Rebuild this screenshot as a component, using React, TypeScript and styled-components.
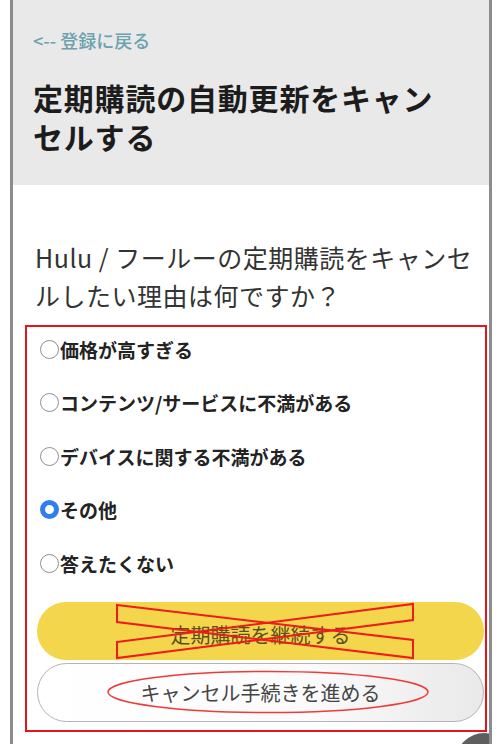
import React from 'react';
import styled, { createGlobalStyle } from 'styled-components';

const GlobalStyle = createGlobalStyle`
  html, body {
    margin: 0;
    padding: 0;
    background: #ffffff;
  }
  body {
    width: 500px;
    height: 744px;
    overflow: hidden;
    font-family: "Noto Sans CJK JP", "Noto Sans", sans-serif;
  }
`;

const Frame = styled.div`
  position: relative;
  margin-left: 10px;
  width: 476px;
  height: 744px;
  border-left: 3px solid #8c8c8c;
  border-right: 3px solid #8c8c8c;
  overflow: hidden;
  background: #ffffff;
`;

const Header = styled.header`
  height: 185px;
  box-sizing: border-box;
  background: #e9e9e9;
  padding: 28px 34px 0 20px;
`;

const BackLink = styled.a`
  display: block;
  color: #6ba2ae;
  font-size: 18px;
  line-height: 24px;
  font-weight: 500;
  text-decoration: none;
`;

const Title = styled.h1`
  margin: 26px 0 0;
  color: #1c1c1c;
  font-size: 30px;
  line-height: 39px;
  font-weight: 700;
  letter-spacing: 0.8px;
`;

const Question = styled.p`
  margin: 53px 0 0;
  padding-left: 22px;
  color: #333333;
  font-size: 25px;
  line-height: 38px;
  font-weight: 400;
  letter-spacing: 0.5px;
`;

const Annotated = styled.section`
  margin: 11px 2px 0 12px;
  border: 2px solid #e8141a;
  padding: 10px 1px 8px 10px;
`;

const Options = styled.div`
  display: flex;
  flex-direction: column;
  gap: 29.5px;
  padding-left: 3px;
`;

const Option = styled.label`
  display: flex;
  align-items: center;
  height: 24px;
  font-size: 19px;
  font-weight: 700;
  color: #232323;
`;

const Radio = styled.span<{ $checked?: boolean }>`
  display: block;
  box-sizing: border-box;
  width: 19px;
  min-width: 19px;
  height: 19px;
  margin-right: 1px;
  border-radius: 50%;
  background: #ffffff;
  border: ${(p) => (p.$checked ? '5px solid #2f7ff0' : '1.8px solid #8f8f8f')};
`;

const Buttons = styled.div`
  display: flex;
  flex-direction: column;
  gap: 3px;
  margin-top: 27px;
`;

const PillButton = styled.button<{ $primary?: boolean }>`
  position: relative;
  height: ${(p) => (p.$primary ? '58px' : '59px')};
  border-radius: 30px;
  border: ${(p) => (p.$primary ? 'none' : '1.5px solid #b4b4b4')};
  background: ${(p) =>
    p.$primary ? '#f4d64c' : 'linear-gradient(90deg, #ffffff 0%, #fbfbfb 60%, #e9e9e9 100%)'};
  color: ${(p) => (p.$primary ? '#5a5020' : '#454545')};
  font-family: "Noto Sans CJK JP", sans-serif;
  font-size: 20px;
  padding-top: ${(p) => (p.$primary ? '8px' : '0')};
  cursor: pointer;
`;

const Mark = styled.svg`
  position: absolute;
  left: 0;
  top: 0;
  pointer-events: none;
`;

const Fab = styled.div`
  position: absolute;
  left: 443px;
  top: 733px;
  width: 56px;
  height: 56px;
  border-radius: 50%;
  background: #5e5e5e;
`;

const reasons = [
  '価格が高すぎる',
  'コンテンツ/サービスに不満がある',
  'デバイスに関する不満がある',
  'その他',
  '答えたくない',
];

export default function App() {
  return (
    <>
      <GlobalStyle />
      <Frame>
        <Header>
          <BackLink href="#">{'<-- 登録に戻る'}</BackLink>
          <Title>定期購読の自動更新をキャンセルする</Title>
        </Header>
        <Question>Hulu / フールーの定期購読をキャンセルしたい理由は何ですか？</Question>
        <Annotated>
          <Options>
            {reasons.map((r) => (
              <Option key={r}>
                <Radio $checked={r === 'その他'} />
                {r}
              </Option>
            ))}
          </Options>
          <Buttons>
            <PillButton $primary>
              定期購読を継続する
              <Mark width="448" height="58" viewBox="0 0 448 58">
                <polygon points="80,3 376,38 376,56 80,20" fill="none" stroke="#ee1c1c" strokeWidth="2" />
                <polygon points="80,40 376,2 376,18 80,56" fill="none" stroke="#ee1c1c" strokeWidth="2" />
              </Mark>
            </PillButton>
            <PillButton>
              キャンセル手続きを進める
              <Mark width="448" height="59" viewBox="0 0 448 59">
                <ellipse cx="230" cy="28" rx="160" ry="20.5" fill="none" stroke="#f03a3a" strokeWidth="1.5" />
              </Mark>
            </PillButton>
          </Buttons>
        </Annotated>
        <Fab />
      </Frame>
    </>
  );
}
